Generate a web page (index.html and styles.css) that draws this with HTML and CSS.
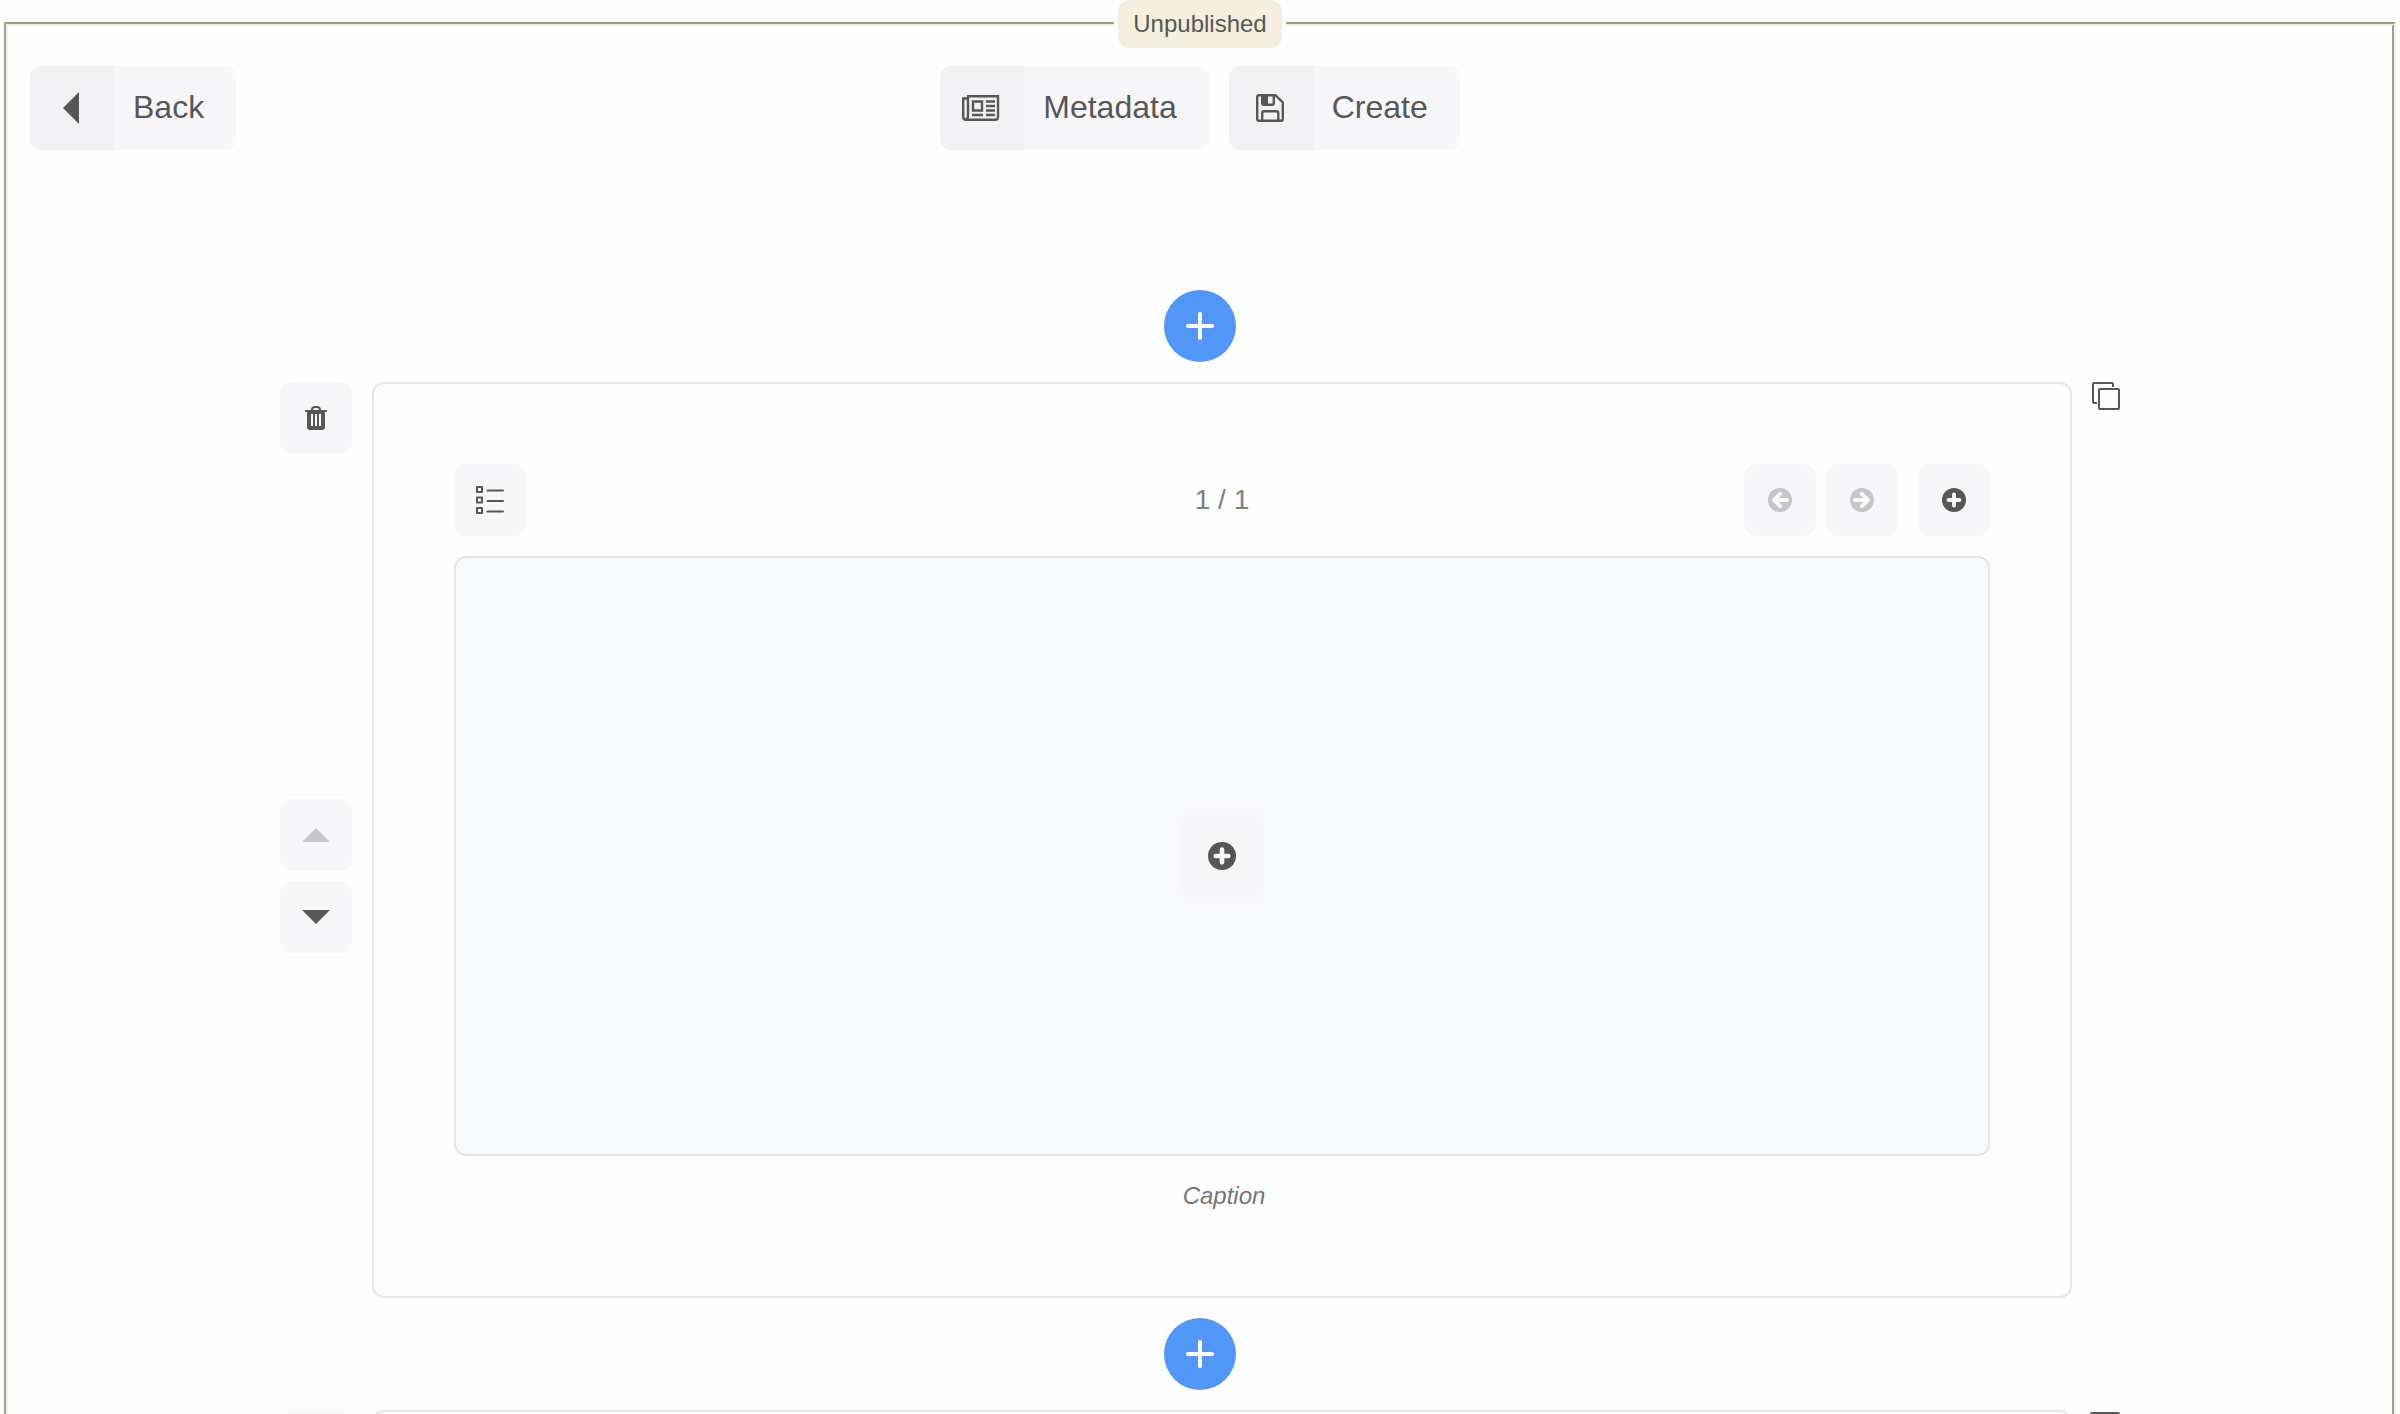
FILE: index.html
```html
<!DOCTYPE html>
<html lang="en">
<head>
<meta charset="utf-8">
<meta name="viewport" content="width=device-width, initial-scale=1">
<title>Unpublished</title>
<link rel="stylesheet" href="styles.css">
</head>
<body>
<svg class="defs" aria-hidden="true">
  <symbol id="plus" viewBox="0 0 28 28"><path d="M14 2v24M2 14h24" fill="none" stroke="#fff" stroke-width="4" stroke-linecap="round"/></symbol>
  <symbol id="circle-plus" viewBox="0 0 24 24"><circle cx="12" cy="12" r="12" fill="currentColor"/><path d="M12 6.600v10.800M6.600 12h10.800" fill="none" stroke="#f7f7f9" stroke-width="4" stroke-linecap="round"/></symbol>
  <symbol id="circle-left" viewBox="0 0 24 24"><circle cx="12" cy="12" r="12" fill="currentColor"/><path d="M12.200 5.800L6 12l6.200 6.200M7 12h12" fill="none" stroke="#f7f7f9" stroke-width="4" stroke-linecap="round" stroke-linejoin="round"/></symbol>
  <symbol id="trash" viewBox="0 0 22 24"><path d="M0 4h22v2H0z" fill="currentColor"/><path d="M7 5V3.500Q7.500 1 10 1h2q2.500 0 3 2.500V5" fill="none" stroke="currentColor" stroke-width="2"/><path fill="currentColor" fill-rule="evenodd" d="M2 5h18v16q0 3-3 3H5q-3 0-3-3zM6 8v12h2V8zM10 8v12h2V8zM14 8v12h2V8z"/></symbol>
  <symbol id="up" viewBox="0 0 28 14"><path d="M0 14L14 0l14 14z" fill="currentColor"/></symbol>
</svg>
<fieldset class="frame">
  <legend class="status"><span class="badge">Unpublished</span></legend>

  <header class="toolbar">
    <button class="action" type="button">
      <span class="action-icon"><svg width="16" height="32" viewBox="0 0 16 32"><path d="M16 0v32L0 16z" fill="currentColor"/></svg></span>
      <span class="action-label">Back</span>
    </button>
    <div class="actions">
      <button class="action" type="button">
        <span class="action-icon"><svg width="38" height="26" viewBox="0 0 38 26" fill="none" stroke="currentColor" stroke-width="2.400"><path d="M6 22V1.200h30v20.800q0 2.800-3 2.800H4q-2.800 0-2.800-3V3.500H6M6 21q0 3-2 3.800M24 6.500h9M24 11h9M24 15.500h9M24 20h9M10 20h11"/><path d="M11 6.500h9v9h-9z"/></svg></span>
        <span class="action-label">Metadata</span>
      </button>
      <button class="action" type="button">
        <span class="action-icon"><svg width="28" height="28" viewBox="0 0 28 28" fill="none" stroke="currentColor" stroke-width="2.400"><path d="M3 1.200h16.500L26.800 8.500V25q0 1.800-1.800 1.800H3q-1.800 0-1.800-1.800V3q0-1.800 1.800-1.800zM6.200 27V19q0-1.800 1.800-1.800h12.500q1.800 0 1.800 1.800v8M6.200 1v8q0 1.800 1.800 1.800h8q1.800 0 1.800-1.800V1"/><path d="M6 1h6v10H6z" fill="currentColor" stroke="none"/></svg></span>
        <span class="action-label">Create</span>
      </button>
    </div>
  </header>

  <main class="content">
    <button class="insert" type="button" aria-label="Insert module"><svg width="28" height="28"><use href="#plus"/></svg></button>

    <section class="module">
      <div class="controls">
        <button class="tool" type="button" aria-label="Delete"><svg width="22" height="24"><use href="#trash"/></svg></button>
        <div class="order">
          <button class="tool" type="button" aria-label="Move up" disabled><svg width="28" height="14"><use href="#up"/></svg></button>
          <button class="tool" type="button" aria-label="Move down"><svg class="flip-y" width="28" height="14"><use href="#up"/></svg></button>
        </div>
      </div>
      <div class="card">
        <div class="gallery-bar">
          <button class="tool" type="button" aria-label="Show list"><svg width="28" height="28" viewBox="0 0 28 28" fill="none" stroke="currentColor" stroke-width="2"><path d="M1 1h5v5H1zM1 11.500h5v5H1zM1 22h5v5H1z" stroke-linejoin="round"/><path d="M11.500 4.400H27M11.500 14.900H27M11.500 25.400H27" stroke-linecap="round"/></svg></button>
          <span class="counter">1 / 1</span>
          <div class="gallery-nav">
            <div class="pager">
              <button class="tool" type="button" aria-label="Previous" disabled><svg width="24" height="24"><use href="#circle-left"/></svg></button>
              <button class="tool" type="button" aria-label="Next" disabled><svg class="flip-x" width="24" height="24"><use href="#circle-left"/></svg></button>
            </div>
            <button class="tool" type="button" aria-label="Add slide"><svg width="24" height="24"><use href="#circle-plus"/></svg></button>
          </div>
        </div>
        <div class="canvas">
          <button class="tool tool-large" type="button" aria-label="Add image"><svg width="28" height="28"><use href="#circle-plus"/></svg></button>
        </div>
        <input class="caption" type="text" placeholder="Caption" aria-label="Caption">
      </div>
      <svg class="kind" width="28" height="28" viewBox="0 0 28 28" fill="none" stroke="currentColor" stroke-width="2"><rect x="7" y="7" width="20" height="20" rx="1"/><path d="M21 5V2q0-1-1-1H2Q1 1 1 2v18q0 1 1 1h3"/></svg>
    </section>

    <button class="insert" type="button" aria-label="Insert module"><svg width="28" height="28"><use href="#plus"/></svg></button>

    <section class="module">
      <div class="controls">
        <button class="tool" type="button" aria-label="Delete"><svg width="22" height="24"><use href="#trash"/></svg></button>
      </div>
      <div class="card"></div>
      <svg class="kind" width="30" height="28" viewBox="0 0 30 28"><path d="M2 2h26q2 0 2 2v6H0V4q0-2 2-2z" fill="currentColor"/><path d="M12 10h6v18h-6z" fill="currentColor"/></svg>
    </section>
  </main>
</fieldset>
</body>
</html>
```
FILE: styles.css
```css
* {
  box-sizing: border-box;
}

body {
  height: 100vh;
  margin: 0;
  overflow: hidden;
  background: #fefefe;
  color: #575757;
  font-family: "Liberation Sans", Arial, sans-serif;
  font-size: 24px;
}

svg {
  display: block;
}

.defs {
  display: none;
}

button,
input {
  margin: 0;
  padding: 0;
  border: 0;
  color: inherit;
  font: inherit;
}

.frame {
  min-width: 0;
  margin: 0 4px;
  padding: 18px 22px;
  border: 4px groove #f6eedf;
}

.status {
  margin: 0 auto;
  padding: 0 4px;
}

.badge {
  display: block;
  padding: 0 15px;
  border-radius: 12px;
  background: #f6eedf;
  line-height: 48px;
}

.toolbar {
  display: grid;
  grid-template-columns: 1fr auto 1fr;
  justify-items: start;
}

.actions {
  display: flex;
  gap: 20px;
}

.action {
  display: flex;
  height: 84px;
  overflow: hidden;
  border-radius: 12px;
  background: #f7f7f9;
  font-size: 32px;
  line-height: 82px;
}

.action-icon {
  display: flex;
  align-items: center;
  justify-content: center;
  width: 84px;
  height: 84px;
  padding-right: 2px;
  background: #f2f2f4;
}

.action-label {
  padding: 0 32px 0 19px;
}

.content {
  display: flex;
  flex-direction: column;
  align-items: center;
  gap: 20px;
  padding-top: 140px;
}

.insert {
  display: grid;
  place-items: center;
  width: 72px;
  height: 72px;
  border-radius: 50%;
  background: #5296f8;
}

.module {
  display: grid;
  grid-template-columns: 72px 1fr 28px;
  gap: 20px;
  width: 100%;
  max-width: 1840px;
}

.controls {
  display: flex;
  flex-direction: column;
}

.order {
  display: grid;
  gap: 10px;
  margin: auto 0;
}

.tool {
  display: grid;
  place-items: center;
  width: 72px;
  height: 72px;
  border-radius: 12px;
  background: #f7f7f9;
}

.tool:disabled {
  color: #c5c6c8;
}

.tool-large {
  width: 84px;
  height: 84px;
}

.flip-x {
  transform: scaleX(-1);
}

.flip-y {
  transform: scaleY(-1);
}

.card {
  display: flex;
  flex-direction: column;
  gap: 20px;
  min-height: 200px;
  padding: 80px;
  border: 2px solid #e5e5ea;
  border-radius: 12px;
}

.gallery-bar {
  display: grid;
  grid-template-columns: 1fr auto 1fr;
  align-items: center;
}

.counter {
  color: #808080;
  font-size: 28px;
}

.gallery-nav {
  display: flex;
  gap: 20px;
  justify-self: end;
}

.pager {
  display: flex;
  gap: 10px;
}

.canvas {
  display: grid;
  place-items: center;
  min-height: 600px;
  border: 2px solid #e5e5ea;
  border-radius: 12px;
  background: #f8f9fb;
}

.caption {
  width: 100%;
  height: 40px;
  padding-left: 4px;
  background: transparent;
  font-style: italic;
  text-align: center;
}

.caption::placeholder {
  color: #757575;
}

.kind {
  justify-self: end;
}
```
